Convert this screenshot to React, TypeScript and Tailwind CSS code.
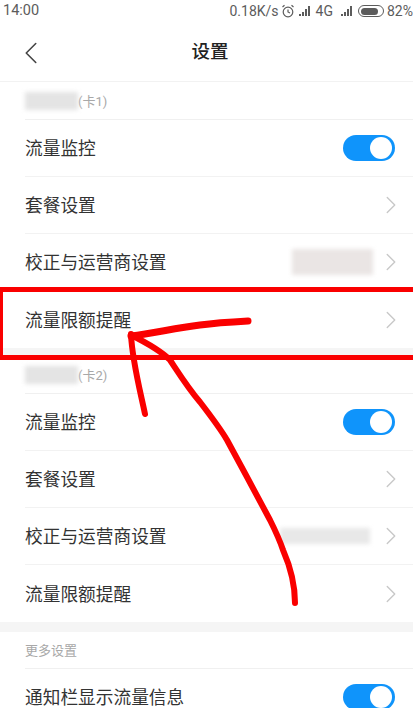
import React from 'react';
import { ChevronRight, ChevronLeft } from 'lucide-react';

const FONT = "font-['Roboto','Noto_Sans_CJK_SC',sans-serif]";

function Toggle() {
  return (
    <div className="w-[52px] h-[26px] rounded-full bg-[#0f94fb] flex items-center justify-end pr-[3px]">
      <div className="w-[22px] h-[22px] rounded-full bg-white" />
    </div>
  );
}

function Row({ title, blur, toggle, last }: { title: string; blur?: string; toggle?: boolean; last?: boolean }) {
  return (
    <div className={'h-[57px] ml-[25px] pr-[18px] flex items-center justify-between ' + (last ? '' : 'border-b border-[#f2f2f2]')}>
      <span className="text-[17.7px] text-[#333] pt-[3px]">{title}</span>
      {toggle ? (
        <Toggle />
      ) : (
        <div className="flex items-center -mr-[11px]">
          {blur && <div className={blur} />}
          <ChevronRight className="w-[30px] h-[30px] text-[#c8c8c8]" strokeWidth={1.1} />
        </div>
      )}
    </div>
  );
}

function Label({ blurW, text, height }: { blurW?: string; text: string; height: string }) {
  return (
    <div className={height + ' ml-[25px] flex items-center border-b border-[#f0f0f0] text-[13px] text-[#a8a8a8]'}>
      {blurW && <div className={blurW} />}
      <span className="pt-[2px]">{text}</span>
    </div>
  );
}

export default function App() {
  return (
    <div className={'relative w-[413px] h-[708px] overflow-hidden bg-white ' + FONT}>
      {/* Status bar */}
      <div className="h-[24px] pl-[3px] pb-[2px] flex items-center justify-between text-[14px] text-[#5c5c5c]">
        <span className="text-[14.5px]">14:00</span>
        <div className="flex items-center whitespace-nowrap">
          <span>0.18K/s</span>
          <svg viewBox="0 0 14 14" className="w-[14px] h-[14px] ml-[2px]" fill="none" stroke="#5c5c5c" strokeWidth="1.2">
            <circle cx="7" cy="8" r="4.8" />
            <path d="M7 5.5V8l2 1M1.5 3 3.5 1.2M12.5 3l-2-1.8" />
          </svg>
          <svg viewBox="0 0 14 12" className="w-[14px] h-[12px] ml-[4px]" fill="#5c5c5c">
            <rect x="0" y="9" width="2" height="2" />
            <rect x="3" y="7" width="2" height="4" />
            <rect x="6" y="4" width="2" height="7" />
            <rect x="9" y="1" width="2" height="10" />
          </svg>
          <span className="ml-[3px]">4G</span>
          <span className="w-[6px]" />
          <svg viewBox="0 0 14 12" className="w-[14px] h-[12px] ml-[2px]" fill="#5c5c5c">
            <rect x="0" y="9" width="2" height="2" />
            <rect x="3" y="7" width="2" height="4" />
            <rect x="6" y="4" width="2" height="7" />
            <rect x="9" y="1" width="2" height="10" />
          </svg>
          <div className="ml-[3px] w-[26px] h-[12px] rounded-full border border-[#5c5c5c] p-[1.5px]">
            <div className="w-[85%] h-full rounded-full bg-[#5c5c5c]" />
          </div>
          <span className="ml-[3px]">82%</span>
        </div>
      </div>

      {/* Header */}
      <div className="relative h-[58px] pl-[7px] flex items-center justify-center border-b border-[#f2f2f2]">
        <ChevronLeft className="absolute left-[12px] top-[10px] w-[38px] h-[38px] text-[#444]" strokeWidth={1} />
        <span className="text-[18.5px] font-medium text-[#222]">设置</span>
      </div>

      <Label height="h-[38px]" blurW="w-[53px] h-[18px] bg-[#e4e4e4] blur-[2px]" text="(卡1)" />
      <Row title="流量监控" toggle />
      <Row title="套餐设置" />
      <Row title="校正与运营商设置" blur="w-[81px] h-[26px] mr-[3px] bg-[#eae5e4] blur-[2px]" />
      <Row title="流量限额提醒" last />
      <div className="h-[9px] bg-[#f5f5f5]" />

      <Label height="h-[37px]" blurW="w-[53px] h-[18px] bg-[#e4e4e4] blur-[2px]" text="(卡2)" />
      <Row title="流量监控" toggle />
      <Row title="套餐设置" />
      <Row title="校正与运营商设置" blur="w-[90px] h-[16px] mr-[6px] bg-[#e8e8e8] blur-[2px]" />
      <Row title="流量限额提醒" last />
      <div className="h-[10px] bg-[#f5f5f5]" />

      <Label height="h-[37px]" text="更多设置" />
      <Row title="通知栏显示流量信息" toggle />

      {/* Red annotation */}
      <div className="absolute left-0 top-[287px] w-[420px] h-[73px] border-[5px] border-l-[3px] border-[#fa0000]" />
      <svg className="absolute inset-0" width="413" height="708" fill="none" stroke="#fa0000" strokeLinecap="round" strokeLinejoin="round">
        <path strokeWidth="7" d="M248 321C230 322 215 323 200 325C175 328 155 333 131 336" />
        <path strokeWidth="6" d="M131 334C132 360 140 390 145 414" />
        <path strokeWidth="6" d="M131 335C145 342 160 350 170 360C178 372 188 388 200 402C210 415 220 428 227 440L247 477L270 520C276 532 280 541 283 550C290 566 295 585 295 603" />
      </svg>
    </div>
  );
}
